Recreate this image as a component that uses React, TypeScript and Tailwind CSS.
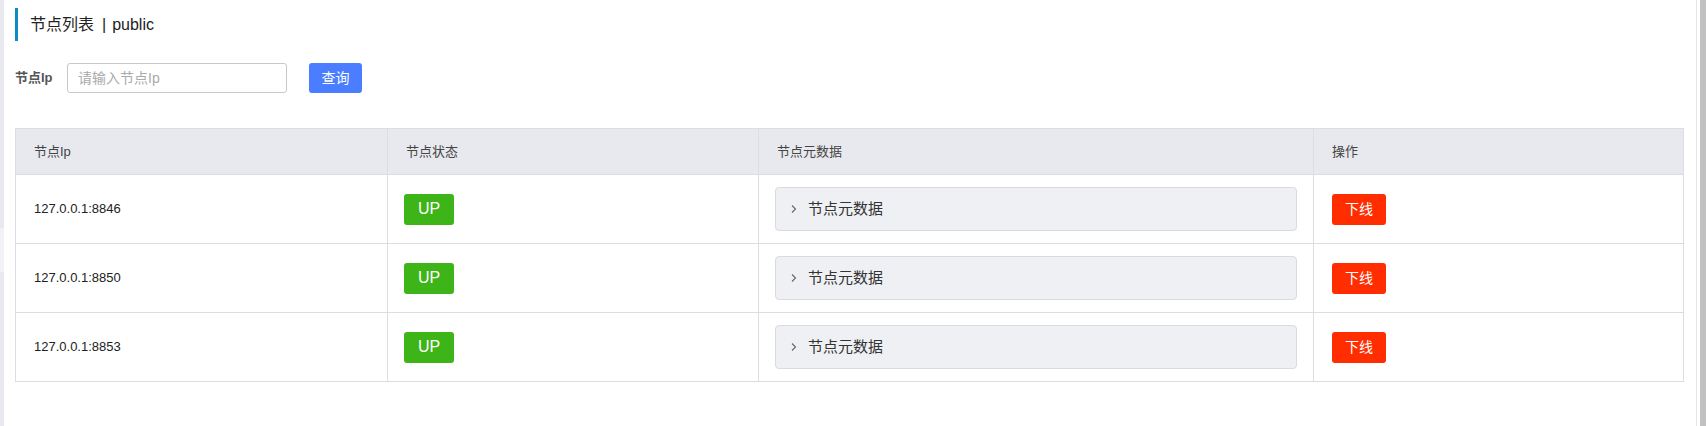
import React from 'react';

const FONT = "font-['Liberation_Sans','Noto_Sans_CJK_SC',sans-serif]";

const NODES = [
  { ip: '127.0.0.1:8846', status: 'UP' },
  { ip: '127.0.0.1:8850', status: 'UP' },
  { ip: '127.0.0.1:8853', status: 'UP' },
];

const Chevron = () => (
  <svg width="8" height="10" viewBox="0 0 8 10" fill="none" className="shrink-0">
    <path d="M2 1.5 L5.5 5 L2 8.5" stroke="#666" strokeWidth="1.1" />
  </svg>
);

export default function App() {
  return (
    <div className={`${FONT} flex h-[426px] w-[1706px] bg-white text-[#333]`}>
      {/* left sidebar edge */}
      <div className="flex w-[4px] flex-col bg-[#e8e9ee]">
        <div className="h-[228px]" />
        <div className="h-[44px] bg-[#f1f2f5]" />
      </div>

      <div className="flex-1 pl-[11px] pr-[12px]">
        {/* title */}
        <div className="mt-[8px] flex h-[33px] items-center border-l-[3px] border-[#0c8bc4] pl-[12px] text-[16px] text-[#222]">
          节点列表
          <span className="ml-[8px] mr-[6px]">|</span>
          <span>public</span>
        </div>

        {/* search */}
        <div className="mt-[22px] flex h-[30px] items-center">
          <span className="w-[52px] text-[13px] font-bold text-[#555]">节点Ip</span>
          <input
            placeholder="请输入节点Ip"
            className="h-[30px] w-[220px] rounded-[3px] border border-[#c8c8cc] px-[10px] text-[14px] placeholder:text-[#aaa] outline-none"
          />
          <button className="ml-[22px] h-[30px] w-[53px] rounded-[3px] bg-[#4a7dff] text-[14px] text-white">
            查询
          </button>
        </div>

        {/* table */}
        <div className="mt-[35px] grid grid-cols-[372px_371px_555px_1fr] border border-[#dcdde2]">
          {['节点Ip', '节点状态', '节点元数据', '操作'].map((h, i) => (
            <div
              key={h}
              className={`flex h-[45px] items-center bg-[#e8e9ee] pl-[18px] text-[13px] text-[#444] ${i < 3 ? 'border-r border-[#dcdde2]' : ''}`}
            >
              {h}
            </div>
          ))}
          {NODES.map((n) => (
            <React.Fragment key={n.ip}>
              <div className="flex h-[69px] items-center border-t border-r border-[#dcdde2] pl-[18px] text-[13px] text-[#222]">
                {n.ip}
              </div>
              <div className="flex h-[69px] items-center border-t border-r border-[#dcdde2] pl-[16px]">
                <span className="flex h-[31px] w-[50px] items-center justify-center rounded-[3px] bg-[#3db418] text-[16px] text-white">
                  {n.status}
                </span>
              </div>
              <div className="flex h-[69px] items-center border-t border-r border-[#dcdde2] pl-[16px] pr-[16px]">
                <div className="flex h-[44px] w-full items-center gap-[10px] rounded-[4px] border border-[#d9dbe0] bg-[#eff0f4] pl-[14px] text-[15px] text-[#333]">
                  <Chevron />
                  节点元数据
                </div>
              </div>
              <div className="flex h-[69px] items-center border-t border-[#dcdde2] pl-[18px]">
                <button className="h-[31px] w-[54px] rounded-[3px] bg-[#ff2d00] text-[14px] text-white">
                  下线
                </button>
              </div>
            </React.Fragment>
          ))}
        </div>
      </div>

      {/* scrollbar */}
      <div className="w-px bg-[#e6e6e6]" />
      <div className="w-[3px] bg-white" />
      <div className="w-[6px] bg-[#c1c1c1]" />
    </div>
  );
}
